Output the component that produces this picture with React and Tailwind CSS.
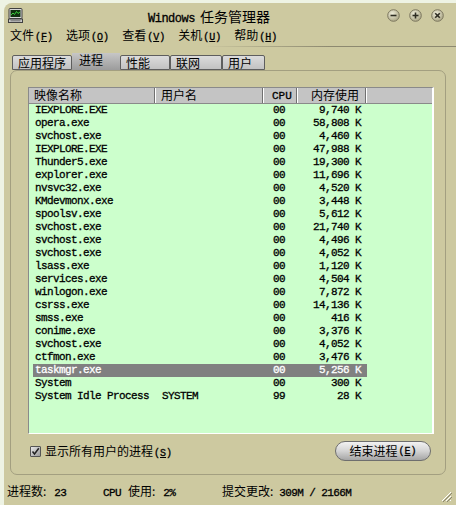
import React from 'react';

const rows = [
  ['IEXPLORE.EXE', '', '00', '9,740 K'],
  ['opera.exe', '', '00', '58,808 K'],
  ['svchost.exe', '', '00', '4,460 K'],
  ['IEXPLORE.EXE', '', '00', '47,988 K'],
  ['Thunder5.exe', '', '00', '19,300 K'],
  ['explorer.exe', '', '00', '11,696 K'],
  ['nvsvc32.exe', '', '00', '4,520 K'],
  ['KMdevmonx.exe', '', '00', '3,448 K'],
  ['spoolsv.exe', '', '00', '5,612 K'],
  ['svchost.exe', '', '00', '21,740 K'],
  ['svchost.exe', '', '00', '4,496 K'],
  ['svchost.exe', '', '00', '4,052 K'],
  ['lsass.exe', '', '00', '1,120 K'],
  ['services.exe', '', '00', '4,504 K'],
  ['winlogon.exe', '', '00', '7,872 K'],
  ['csrss.exe', '', '00', '14,136 K'],
  ['smss.exe', '', '00', '416 K'],
  ['conime.exe', '', '00', '3,376 K'],
  ['svchost.exe', '', '00', '4,052 K'],
  ['ctfmon.exe', '', '00', '3,476 K'],
  ['taskmgr.exe', '', '00', '5,256 K'],
  ['System', '', '00', '300 K'],
  ['System Idle Process', 'SYSTEM', '99', '28 K'],
];

const menus = [
  ['文件', 'F'],
  ['选项', 'O'],
  ['查看', 'V'],
  ['关机', 'U'],
  ['帮助', 'H'],
];

const tabs = [
  { label: '应用程序', w: 'w-[60px]' },
  { label: '进程', w: 'w-[48px]', active: true },
  { label: '性能', w: 'w-[50px]' },
  { label: '联网', w: 'w-[52px]' },
  { label: '用户', w: 'w-[43px]' },
];

const AppIcon = () => (
  <svg width="15" height="15" viewBox="0 0 15 15">
    <rect x="1" y="0.5" width="13" height="10" rx="1" fill="#d8d8d8" stroke="#404040" />
    <rect x="2.5" y="2" width="10" height="7" fill="#103010" />
    <polyline points="3,7 5,5 6.5,6.5 8.5,3.5 10,5.5 12,4" fill="none" stroke="#40e040" strokeWidth="0.9" />
    <rect x="0.5" y="11" width="14" height="3.5" fill="#c8c8c8" stroke="#404040" />
    <line x1="2.5" y1="12.8" x2="12.5" y2="12.8" stroke="#707070" />
  </svg>
);

const CaptionButton = ({ kind }) => (
  <svg width="13" height="13" viewBox="0 0 13 13">
    <defs>
      <radialGradient id={`cb-${kind}`} cx="40%" cy="35%" r="70%">
        <stop offset="0%" stopColor="#f0eedc" />
        <stop offset="100%" stopColor="#a8a381" />
      </radialGradient>
    </defs>
    <circle cx="6.5" cy="6.5" r="5.8" fill={`url(#cb-${kind})`} stroke="#7d7860" strokeWidth="1" />
    {kind === 'min' && <line x1="3.5" y1="6.5" x2="9.5" y2="6.5" stroke="#2e2c22" strokeWidth="1.6" />}
    {kind === 'max' && (
      <g stroke="#2e2c22" strokeWidth="1.6">
        <line x1="3.5" y1="6.5" x2="9.5" y2="6.5" />
        <line x1="6.5" y1="3.5" x2="6.5" y2="9.5" />
      </g>
    )}
    {kind === 'close' && (
      <g stroke="#2e2c22" strokeWidth="1.6">
        <line x1="4.2" y1="4.2" x2="8.8" y2="8.8" />
        <line x1="8.8" y1="4.2" x2="4.2" y2="8.8" />
      </g>
    )}
  </svg>
);

const HeaderCell = ({ w, align = 'text-left', pad, children }) => (
  <div className={`${w} ${align} ${pad} h-full flex items-center border-r border-[#707070] shadow-[1px_0_0_#ffffff]`}>
    <span className="w-full">{children}</span>
  </div>
);

export default function App() {
  return (
    <div className="w-[456px] h-[505px] bg-[#eef3e4] pl-[4px] pt-[3px] overflow-hidden font-['Liberation_Mono','Noto_Sans_CJK_SC',monospace] text-black">
      <div className="h-full bg-[#cdc9a0] rounded-tl-[8px] flex flex-col">
        {/* title bar */}
        <div className="h-[23px] flex items-center relative">
          <div className="ml-[4px] mt-[2px]">
            <AppIcon />
          </div>
          <div className="absolute left-[144px] top-[3px] flex items-baseline">
            <span className="text-[12px] tracking-[-0.5px] [-webkit-text-stroke:0.3px_#000]">Windows</span>
            <span className="ml-[5px] text-[14px] font-['Noto_Sans_CJK_SC',sans-serif]">任务管理器</span>
          </div>
          <div className="ml-auto mr-[12px] flex gap-[9px] mt-[2px]">
            <CaptionButton kind="min" />
            <CaptionButton kind="max" />
            <CaptionButton kind="close" />
          </div>
        </div>

        {/* menu bar */}
        <div className="h-[18px] flex items-center pl-[6px] gap-[13px] text-[12px]">
          {menus.map(([label, key]) => (
            <span key={key} className="flex items-baseline">
              <span className="font-['Noto_Sans_CJK_SC',sans-serif]">{label}</span>
              <span className="text-[10px] ml-[1px] [-webkit-text-stroke:0.3px_#000]">
                (<span className="underline underline-offset-1">{key}</span>)
              </span>
            </span>
          ))}
        </div>
        <div className="mt-[2px] ml-[200px] h-px bg-gradient-to-r from-[#cdc9a0] via-[#8d8970] to-[#8d8970]" />

        {/* tabs */}
        <div className="mt-[6px] ml-[8px] flex items-end h-[17px] text-[12px] font-['Noto_Sans_CJK_SC',sans-serif]">
          {tabs.map((t) =>
            t.active ? (
              <div
                key={t.label}
                className={`${t.w} h-[17px] pl-[7px] leading-[13px] bg-gradient-to-b from-[#c6c6c6] to-[#9c9c9c]`}
              >
                {t.label}
              </div>
            ) : (
              <div
                key={t.label}
                className={`${t.w} h-[15px] pl-[5px] leading-[14px] bg-gradient-to-b from-[#dcdcdc] to-[#c2c2c2] border border-[#5e5e5e] rounded-t-[2px]`}
              >
                {t.label}
              </div>
            )
          )}
        </div>

        {/* tab page */}
        <div className="ml-[6px] w-[436px] h-[405px] border border-[#a39f80] rounded-[7px] flex flex-col pl-[17px] pt-[16px]">
          <div className="w-[406px] h-[347px] bg-[#ccffcc] border-l border-t border-[#8a8a8a] border-r-2 border-r-white border-b border-b-white">
            {/* column header */}
            <div className="h-[16px] bg-[#c4c4c4] border-b border-[#8a8a8a] flex text-[12px]">
              <HeaderCell w="w-[126px]" pad="pl-[5px]">
                <span className="font-['Noto_Sans_CJK_SC',sans-serif]">映像名称</span>
              </HeaderCell>
              <HeaderCell w="w-[108px]" pad="pl-[6px]">
                <span className="font-['Noto_Sans_CJK_SC',sans-serif]">用户名</span>
              </HeaderCell>
              <HeaderCell w="w-[34px]" pad="pl-[9px]">
                <span className="text-[11px] [-webkit-text-stroke:0.3px_#000]">CPU</span>
              </HeaderCell>
              <HeaderCell w="w-[69px]" align="text-right" pad="pr-[6px]">
                <span className="font-['Noto_Sans_CJK_SC',sans-serif]">内存使用</span>
              </HeaderCell>
            </div>

            {/* process rows */}
            <div className="ml-[4px] w-[334px] text-[11px] tracking-[-0.6px] leading-[13px] [-webkit-text-stroke:0.3px_currentColor]">
              {rows.map(([name, user, cpu, mem], i) => {
                const sel = name === 'taskmgr.exe';
                return (
                  <div key={i} className={`h-[13px] flex ${sel ? 'bg-[#808080] text-white' : ''}`}>
                    <span className="w-[122px] pl-[2px] whitespace-pre">{name}</span>
                    <span className="w-[108px] pl-[7px]">{user}</span>
                    <span className="w-[34px] pl-[10px]">{cpu}</span>
                    <span className="w-[70px] pr-[6px] text-right whitespace-pre">{mem}</span>
                  </div>
                );
              })}
            </div>
          </div>

          <div className="mt-[7px] w-[406px] h-[20px] flex items-center">
            <div className="ml-[2px] w-[11px] h-[11px] border border-[#555] rounded-[1px] bg-gradient-to-br from-[#e8e8e8] to-[#9a9a9a] flex items-center justify-center">
              <svg width="9" height="9" viewBox="0 0 9 9">
                <polyline points="1.5,4.5 3.5,7 7.8,1.2" fill="none" stroke="#222" strokeWidth="1.5" />
              </svg>
            </div>
            <span className="ml-[4px] text-[12px] flex items-baseline">
              <span className="font-['Noto_Sans_CJK_SC',sans-serif]">显示所有用户的进程</span>
              <span className="text-[10px] ml-[1px] [-webkit-text-stroke:0.3px_#000]">
                (<span className="underline underline-offset-1">S</span>)
              </span>
            </span>
            <button className="ml-auto mr-[3px] w-[96px] h-[20px] rounded-full border border-[#6e6e6e] bg-gradient-to-b from-[#f2f2f2] via-[#d4d4d4] to-[#a6a6a6] text-[12px] flex items-center justify-center">
              <span className="font-['Noto_Sans_CJK_SC',sans-serif]">结束进程</span>
              <span className="text-[10px] ml-[1px] [-webkit-text-stroke:0.3px_#000]">
                (<span className="underline underline-offset-1">E</span>)
              </span>
            </button>
          </div>
        </div>

        {/* status bar */}
        <div className="flex-1 flex items-end pb-[4px] pl-[3px] text-[12px] relative">
          <span className="w-[96px] flex items-baseline">
            <span className="font-['Noto_Sans_CJK_SC',sans-serif]">进程数:</span>
            <span className="ml-[8px] text-[11px] tracking-[-0.6px] [-webkit-text-stroke:0.3px_#000]">23</span>
          </span>
          <span className="w-[119px] flex items-baseline">
            <span className="text-[11px] tracking-[-0.6px] [-webkit-text-stroke:0.3px_#000]">CPU</span>
            <span className="ml-[7px] font-['Noto_Sans_CJK_SC',sans-serif]">使用:</span>
            <span className="ml-[8px] text-[11px] tracking-[-0.6px] [-webkit-text-stroke:0.3px_#000]">2%</span>
          </span>
          <span className="flex items-baseline">
            <span className="font-['Noto_Sans_CJK_SC',sans-serif]">提交更改:</span>
            <span className="ml-[6px] text-[11px] tracking-[-0.6px] whitespace-pre [-webkit-text-stroke:0.3px_#000]">309M / 2166M</span>
          </span>
          <svg className="absolute right-[4px] bottom-[3px]" width="11" height="11" viewBox="0 0 11 11">
            <g stroke="#ffffff" strokeWidth="1">
              <line x1="10" y1="1" x2="1" y2="10" />
              <line x1="10" y1="5" x2="5" y2="10" />
              <line x1="10" y1="9" x2="9" y2="10" />
            </g>
            <g stroke="#8a8670" strokeWidth="1">
              <line x1="11" y1="2" x2="2" y2="11" />
              <line x1="11" y1="6" x2="6" y2="11" />
            </g>
          </svg>
        </div>
      </div>
    </div>
  );
}
